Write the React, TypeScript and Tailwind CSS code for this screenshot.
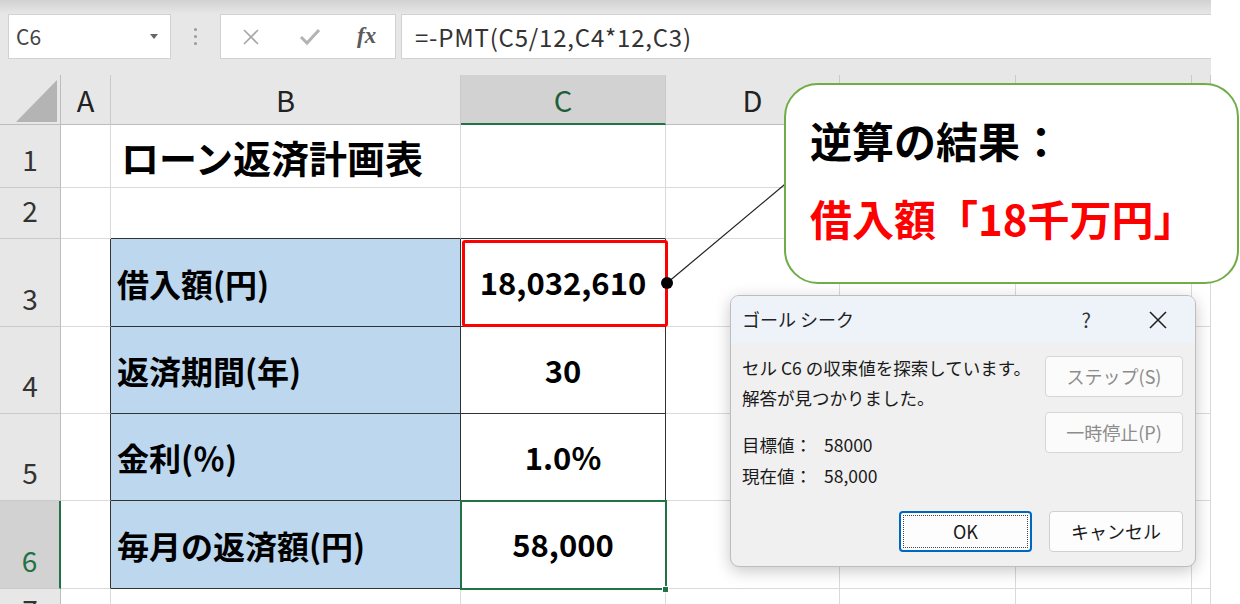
import type { ReactNode } from 'react'

const g = 'border-r border-b border-[#dadada] bg-white'
const rowHead =
  'flex items-end justify-center border-r border-b border-r-[#bdbdbd] border-b-[#cacaca] bg-[#e7e7e7] pb-[14px] text-[28px] leading-none text-[#333]'
const colHead =
  'flex items-center justify-center border-r border-b border-r-[#cacaca] border-b-[#bdbdbd] bg-[#e7e7e7] text-[29px] leading-none text-[#222]'
const edgeA = 'border-r border-b border-r-[#333] border-b-[#dadada] bg-white'
const topB = 'border-r border-b border-r-[#dadada] border-b-[#333] bg-white'
const label =
  'flex items-center border-r border-b border-[#333] bg-[#bdd7ee] pl-[6px] text-[32px] font-bold text-black'
const value =
  'flex items-center justify-center border-r border-b border-[#333] bg-white text-[31px] font-bold text-black'

function Btn({ children, disabled }: { children: ReactNode; disabled?: boolean }) {
  return (
    <div
      className={
        disabled
          ? 'flex h-[41px] w-[138px] items-center justify-center rounded-[4px] border border-[#d6d6d6] bg-[#fbfbfb] text-[18px] text-[#8c8c8c]'
          : 'flex h-[41px] w-[134px] items-center justify-center rounded-[4px] border border-[#d0d0d0] bg-[#fdfdfd] text-[18px] text-[#1a1a1a]'
      }
    >
      {children}
    </div>
  )
}

export default function App() {
  return (
    <div className="relative h-[604px] w-[1240px] overflow-hidden bg-white font-['Noto_Sans_CJK_JP',sans-serif]">
      <div className="w-[1211px] bg-[#e7e7e7]">
        {/* ribbon shadow */}
        <div className="h-[14px] bg-gradient-to-b from-[#d2d2d2] to-[#e7e7e7]" />

        {/* formula bar */}
        <div className="flex h-[45px] items-stretch">
          <div className="ml-[8px] flex w-[163px] items-center justify-between border border-[#d2d2d2] bg-white pl-[7px] pr-[12px]">
            <span className="text-[21px] text-[#444]">C6</span>
            <svg width="8" height="5" viewBox="0 0 8 5">
              <path d="M0 0h8L4 5z" fill="#666" />
            </svg>
          </div>
          <div className="flex w-[49px] flex-col items-center justify-center gap-[4px]">
            <span className="h-[3px] w-[3px] rounded-full bg-[#9a9a9a]" />
            <span className="h-[3px] w-[3px] rounded-full bg-[#9a9a9a]" />
            <span className="h-[3px] w-[3px] rounded-full bg-[#9a9a9a]" />
          </div>
          <div className="flex w-[176px] items-center border border-[#d2d2d2] bg-white">
            <svg className="ml-[22px]" width="16" height="16" viewBox="0 0 16 16">
              <path d="M1 1l14 14M15 1L1 15" stroke="#a6a6a6" strokeWidth="1.6" />
            </svg>
            <svg className="ml-[40px]" width="22" height="18" viewBox="0 0 22 18">
              <path d="M2 9l6 6L20 2" stroke="#b3b3b3" strokeWidth="3" fill="none" />
            </svg>
            <span className="ml-[36px] font-['Liberation_Serif',serif] text-[23px] font-bold italic text-[#5a5a5a]">
              fx
            </span>
          </div>
          <div className="ml-[5px] flex flex-1 items-center border border-r-0 border-[#d2d2d2] bg-white pl-[13px]">
            <span className="text-[24px] tracking-[0.8px] text-[#333]">=-PMT(C5/12,C4*12,C3)</span>
          </div>
        </div>
        <div className="h-[16px]" />

        {/* sheet grid */}
        <div className="grid grid-cols-[61px_50px_350px_205px_174px_176px_176px_19px] grid-rows-[50px_63px_51px_88px_87px_87px_88px_60px]">
          {/* header row */}
          <div className="relative border-r border-b border-r-[#bdbdbd] border-b-[#bdbdbd] bg-[#e7e7e7]">
            <svg className="absolute left-0 top-0" width="61" height="50" viewBox="0 0 61 50">
              <path d="M57 5V47H16z" fill="#b4b4b4" />
            </svg>
          </div>
          <div className={colHead}>A</div>
          <div className={colHead}>B</div>
          <div className="flex items-center justify-center border-r border-b-2 border-r-[#cacaca] border-b-[#217346] bg-[#d2d2d2] text-[29px] leading-none text-[#1e5e3b]">
            C
          </div>
          <div className={colHead}>D</div>
          <div className={colHead}></div>
          <div className={colHead}></div>
          <div className={colHead}></div>

          {/* row 1 */}
          <div className={rowHead}>1</div>
          <div className={g} />
          <div className="flex items-center border-r border-b border-[#dadada] bg-white pl-[10px] text-[38px] font-bold text-black">
            ローン返済計画表
          </div>
          <div className={g} />
          <div className={g} />
          <div className={g} />
          <div className={g} />
          <div className={g} />

          {/* row 2 */}
          <div className={rowHead}>2</div>
          <div className={g} />
          <div className={topB} />
          <div className={topB} />
          <div className={g} />
          <div className={g} />
          <div className={g} />
          <div className={g} />

          {/* row 3 */}
          <div className={rowHead}>3</div>
          <div className={edgeA} />
          <div className={label}>借入額(円)</div>
          <div className={value}>18,032,610</div>
          <div className={g} />
          <div className={g} />
          <div className={g} />
          <div className={g} />

          {/* row 4 */}
          <div className={rowHead}>4</div>
          <div className={edgeA} />
          <div className={label}>返済期間(年)</div>
          <div className={value}>30</div>
          <div className={g} />
          <div className={g} />
          <div className={g} />
          <div className={g} />

          {/* row 5 */}
          <div className={rowHead}>5</div>
          <div className={edgeA} />
          <div className={label}>金利(％)</div>
          <div className={value}>1.0%</div>
          <div className={g} />
          <div className={g} />
          <div className={g} />
          <div className={g} />

          {/* row 6 */}
          <div className="flex items-end justify-center border-r-2 border-b border-r-[#217346] border-b-[#cacaca] bg-[#d2d2d2] pb-[14px] text-[28px] leading-none text-[#217346]">
            6
          </div>
          <div className={edgeA} />
          <div className={label}>毎月の返済額(円)</div>
          <div className={value}>58,000</div>
          <div className={g} />
          <div className={g} />
          <div className={g} />
          <div className={g} />

          {/* row 7 */}
          <div className="flex items-start justify-center border-r border-b border-r-[#bdbdbd] border-b-[#cacaca] bg-[#e7e7e7] pt-[6px] text-[28px] leading-none text-[#333]">
            <span className="block h-[9px] overflow-hidden">7</span>
          </div>
          <div className={g} />
          <div className={g} />
          <div className={g} />
          <div className={g} />
          <div className={g} />
          <div className={g} />
          <div className={g} />
        </div>
      </div>

      {/* active cell C6 */}
      <div className="absolute left-[460px] top-[500px] h-[90px] w-[207px] border-2 border-[#217346]" />
      <div className="absolute left-[662px] top-[586px] h-[7px] w-[7px] border border-white bg-[#217346]" />

      {/* highlight on C3 */}
      <div className="absolute left-[462px] top-[240px] h-[87px] w-[206px] rounded-[3px] border-[3px] border-[#ff0000]" />

      {/* connector */}
      <svg className="absolute left-0 top-0" width="1240" height="604" viewBox="0 0 1240 604">
        <line x1="667" y1="283" x2="790" y2="180" stroke="#222" strokeWidth="1.2" />
        <circle cx="667" cy="283" r="6" fill="#000" />
      </svg>

      {/* callout */}
      <div className="absolute left-[784px] top-[83px] h-[201px] w-[455px] rounded-[34px] border-2 border-[#70ad47] bg-white pl-[24px] pt-[27px] font-bold">
        <div className="text-[42px] leading-[56px] text-black">逆算の結果：</div>
        <div className="mt-[22px] text-[42px] leading-[56px] text-[#ff0000]">借入額「18千万円」</div>
      </div>

      {/* goal seek dialog */}
      <div className="absolute left-[730px] top-[295px] flex h-[272px] w-[466px] flex-col overflow-hidden rounded-[9px] border border-[#bdbdbd] bg-[#f0f0f0] shadow-[0_4px_16px_rgba(0,0,0,0.22)]">
        <div className="flex h-[47px] items-center bg-[#eef2f9] pl-[11px] pr-[28px] text-[18px] text-[#222]">
          <span className="flex-1">ゴール シーク</span>
          <span className="mr-[58px] text-[20px] text-[#333]">?</span>
          <svg width="18" height="18" viewBox="0 0 18 18">
            <path d="M1 1l16 16M17 1L1 17" stroke="#222" strokeWidth="1.6" />
          </svg>
        </div>
        <div className="flex flex-1 justify-between pl-[11px] pr-[12px] pt-[10px] text-[17.5px] text-[#1a1a1a]">
          <div>
            <div className="leading-[30px]">セル C6 の収束値を探索しています。</div>
            <div className="leading-[30px]">解答が見つかりました。</div>
            <div className="mt-[16px] flex leading-[31px]">
              <span className="w-[82px]">目標値：</span>
              <span>58000</span>
            </div>
            <div className="flex leading-[31px]">
              <span className="w-[82px]">現在値：</span>
              <span>58,000</span>
            </div>
          </div>
          <div className="flex flex-col gap-[15px] pt-[3px]">
            <Btn disabled>ステップ(S)</Btn>
            <Btn disabled>一時停止(P)</Btn>
          </div>
        </div>
        <div className="flex justify-end gap-[17px] pb-[14px] pr-[12px]">
          <div className="flex h-[41px] w-[133px] items-center justify-center rounded-[4px] border-2 border-[#0067c0] bg-[#fdfdfd] p-[2px]">
            <div className="flex h-full w-full items-center justify-center border border-dotted border-[#444] text-[18px] text-[#1a1a1a]">
              OK
            </div>
          </div>
          <Btn>キャンセル</Btn>
        </div>
      </div>
    </div>
  )
}
